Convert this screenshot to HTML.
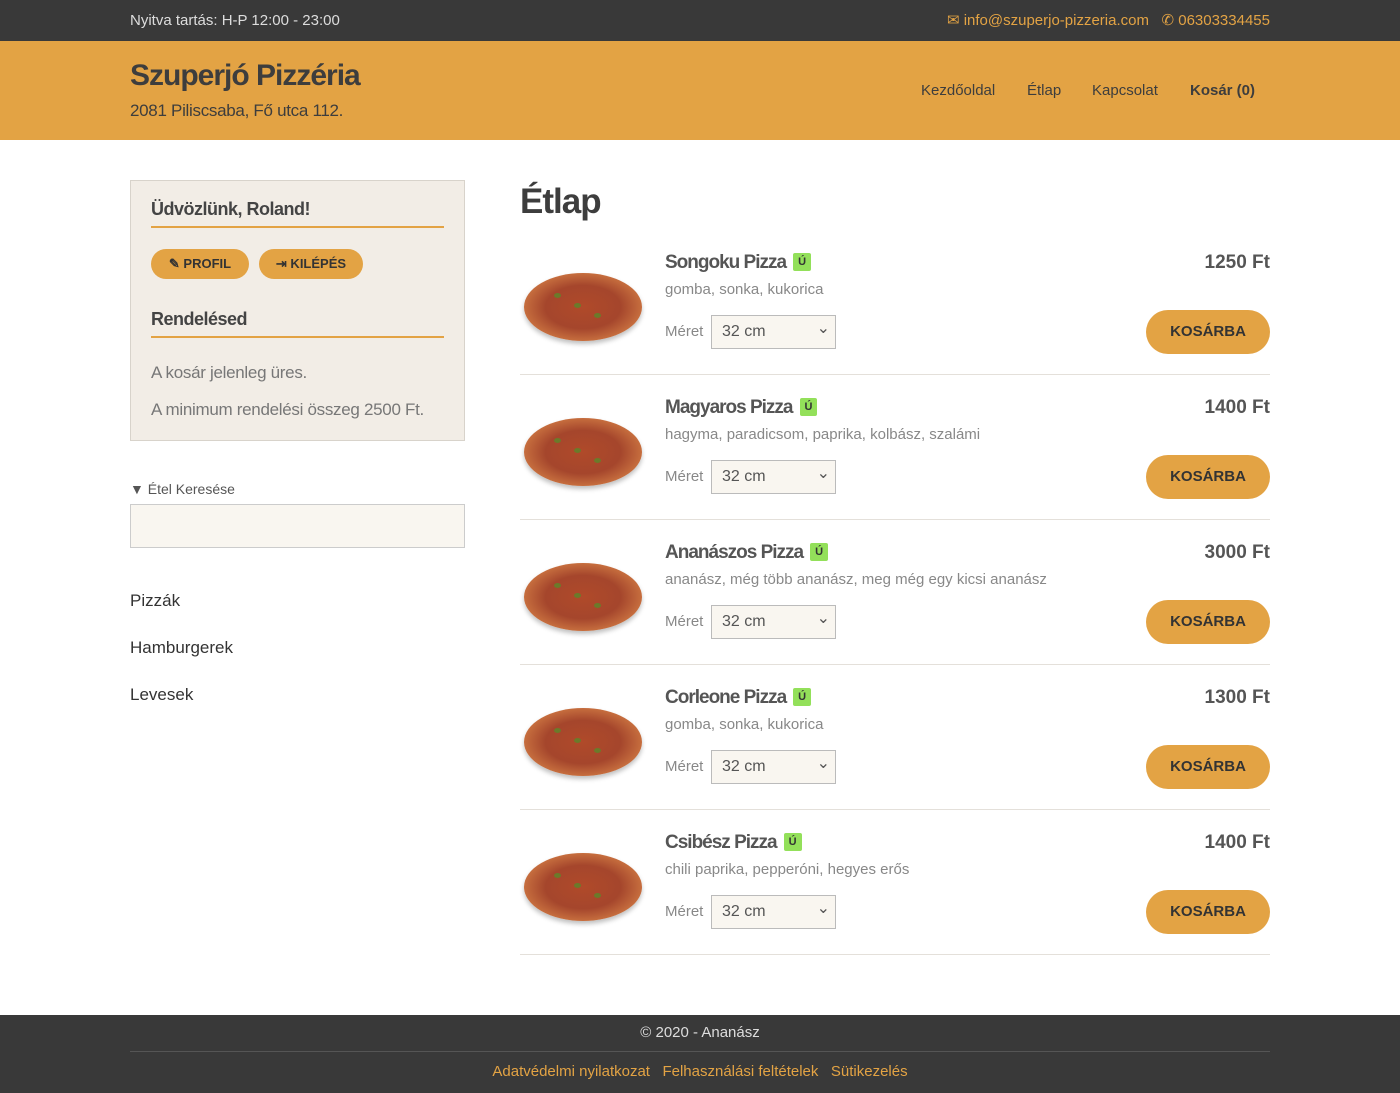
<!DOCTYPE html>
<html><head><meta charset="utf-8"><style>
*{box-sizing:border-box;margin:0;padding:0}
body{width:1400px;height:1093px;font-family:"Liberation Sans",sans-serif;background:#fff;color:#444;position:relative;overflow:hidden}
.top{height:41px;background:#393939;color:#ddd;font-size:15px;position:relative}
.top .l{position:absolute;left:130px;top:12px}
.top .r{position:absolute;right:130px;top:11px;color:#e3a344;font-size:15px}
.hdr{height:99px;background:#e3a344;position:relative}
.hdr h1{position:absolute;left:130px;top:18px;font-size:30px;color:#3d3d3d;letter-spacing:-1px}
.hdr .addr{position:absolute;left:130px;top:60px;font-size:17px;color:#3d3d3d;letter-spacing:-0.3px}
.nav{position:absolute;top:41px;left:921px;font-size:15px;color:#3d3d3d}
.nav span{position:absolute;white-space:nowrap}
.box{position:absolute;left:130px;top:180px;width:335px;height:261px;background:#f2ede6;border:1px solid #d8d3cb}
.box h3{position:absolute;left:20px;font-size:18px;color:#444;width:293px;border-bottom:2px solid #e3a344;padding-bottom:6px;letter-spacing:-0.5px}
.btn{position:absolute;top:68px;height:30px;border-radius:15px;background:#e3a344;font-size:13px;font-weight:bold;color:#333;line-height:30px;text-align:center}
.box p{position:absolute;left:20px;font-size:17px;color:#777;letter-spacing:-0.3px}
.search{position:absolute;left:130px;top:504px;width:335px;height:44px;background:#f9f6f0;border:1px solid #ccc}
.cat{position:absolute;left:130px;font-size:17px;color:#333}
h2{position:absolute;left:520px;top:182px;font-size:35px;color:#3d3d3d;letter-spacing:-1px}
.item{position:absolute;left:520px;width:750px;height:145px;border-bottom:1px solid #e4e0da}
.pz{position:absolute;left:4px;top:43px;width:118px;height:68px;border-radius:50%;background:radial-gradient(ellipse at 50% 50%,#b04a2a 0,#a5462c 45%,#c8703f 72%,#e9c79a 86%,#f0e0c5 92%,rgba(255,255,255,0) 100%);box-shadow:0 3px 5px rgba(0,0,0,.25)}
.pz i{position:absolute;width:7px;height:5px;border-radius:50%;background:#6b7a2a}
.nm{position:absolute;left:145px;top:22px;font-size:19px;font-weight:bold;color:#555;letter-spacing:-1px}
.uj{display:inline-block;background:#93e05a;color:#333;font-size:11px;padding:3px 5px;border-radius:2px;margin-left:7px;vertical-align:3px;letter-spacing:0}
.ds{position:absolute;left:145px;top:51px;font-size:15px;color:#888}
.mr{position:absolute;left:145px;top:93px;font-size:15px;color:#888}
.sel{position:absolute;left:191px;top:85px;width:125px;height:34px;background:#f9f6f0;border:1px solid #bbb;font-size:16px;color:#555;padding:7px 10px}
.sel:after{content:"⌄";position:absolute;right:5px;top:2px;font-size:16px}
.pr{position:absolute;right:0;top:22px;font-size:19px;font-weight:bold;color:#555}
.kb{position:absolute;right:0;top:80px;width:124px;height:44px;border-radius:22px;background:#e3a344;font-size:15px;font-weight:bold;color:#333;text-align:center;line-height:44px}
.foot{position:absolute;left:0;top:1015px;width:1400px;height:78px;background:#393939}
.foot .c{position:absolute;width:100%;text-align:center;top:9px;color:#ddd;font-size:15px}
.foot hr{position:absolute;left:130px;width:1140px;top:36px;border:0;border-top:1px solid #555}
.foot .lk{position:absolute;width:100%;text-align:center;top:48px;color:#e3a344;font-size:15px}
</style></head><body>
<div class="top"><span class="l">Nyitva tartás: H-P 12:00 - 23:00</span><span class="r">✉ info@szuperjo-pizzeria.com &nbsp; ✆ 06303334455</span></div>
<div class="hdr"><h1>Szuperjó Pizzéria</h1><div class="addr">2081 Piliscsaba, Fő utca 112.</div>
<div class="nav"><span style="left:0">Kezdőoldal</span><span style="left:106px">Étlap</span><span style="left:171px">Kapcsolat</span><span style="left:269px;font-weight:bold">Kosár (0)</span></div></div>
<div class="box"><h3 style="top:18px">Üdvözlünk, Roland!</h3>
<div class="btn" style="left:20px;width:98px">✎ PROFIL</div><div class="btn" style="left:128px;width:104px">⇥ KILÉPÉS</div>
<h3 style="top:128px">Rendelésed</h3>
<p style="top:182px">A kosár jelenleg üres.</p><p style="top:219px">A minimum rendelési összeg 2500 Ft.</p></div>
<div style="position:absolute;left:130px;top:481px;font-size:14px;color:#555">▼ Étel Keresése</div>
<div class="search"></div>
<div class="cat" style="top:591px">Pizzák</div><div class="cat" style="top:638px">Hamburgerek</div><div class="cat" style="top:685px">Levesek</div>
<h2>Étlap</h2>

<div class="item" style="top:230px"><div class="pz"><i style="left:30px;top:20px"></i><i style="left:70px;top:40px"></i><i style="left:50px;top:30px"></i></div><div class="nm">Songoku Pizza<span class="uj">Ú</span></div><div class="ds">gomba, sonka, kukorica</div><div class="mr">Méret</div><div class="sel">32 cm</div><div class="pr">1250 Ft</div><div class="kb">KOSÁRBA</div></div>
<div class="item" style="top:375px"><div class="pz"><i style="left:30px;top:20px"></i><i style="left:70px;top:40px"></i><i style="left:50px;top:30px"></i></div><div class="nm">Magyaros Pizza<span class="uj">Ú</span></div><div class="ds">hagyma, paradicsom, paprika, kolbász, szalámi</div><div class="mr">Méret</div><div class="sel">32 cm</div><div class="pr">1400 Ft</div><div class="kb">KOSÁRBA</div></div>
<div class="item" style="top:520px"><div class="pz"><i style="left:30px;top:20px"></i><i style="left:70px;top:40px"></i><i style="left:50px;top:30px"></i></div><div class="nm">Ananászos Pizza<span class="uj">Ú</span></div><div class="ds">ananász, még több ananász, meg még egy kicsi ananász</div><div class="mr">Méret</div><div class="sel">32 cm</div><div class="pr">3000 Ft</div><div class="kb">KOSÁRBA</div></div>
<div class="item" style="top:665px"><div class="pz"><i style="left:30px;top:20px"></i><i style="left:70px;top:40px"></i><i style="left:50px;top:30px"></i></div><div class="nm">Corleone Pizza<span class="uj">Ú</span></div><div class="ds">gomba, sonka, kukorica</div><div class="mr">Méret</div><div class="sel">32 cm</div><div class="pr">1300 Ft</div><div class="kb">KOSÁRBA</div></div>
<div class="item" style="top:810px"><div class="pz"><i style="left:30px;top:20px"></i><i style="left:70px;top:40px"></i><i style="left:50px;top:30px"></i></div><div class="nm">Csibész Pizza<span class="uj">Ú</span></div><div class="ds">chili paprika, pepperóni, hegyes erős</div><div class="mr">Méret</div><div class="sel">32 cm</div><div class="pr">1400 Ft</div><div class="kb">KOSÁRBA</div></div>

<div class="foot"><div class="c">© 2020 - Ananász</div><hr><div class="lk">Adatvédelmi nyilatkozat &nbsp; Felhasználási feltételek &nbsp; Sütikezelés</div></div>
</body></html>
